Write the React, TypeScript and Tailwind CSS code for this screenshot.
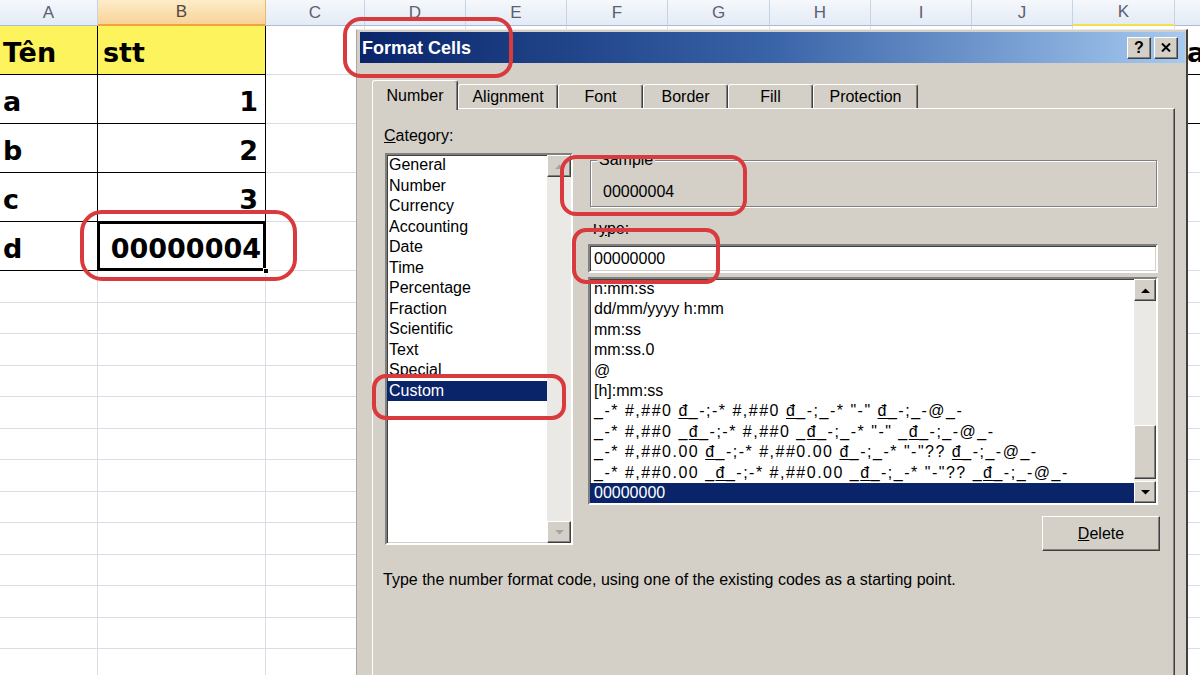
import type { ReactNode } from "react";

// Excel 2007 sheet with the classic "Format Cells" dialog on top, plus red marker boxes.

const COLS = [
  { id: "A", w: "w-[98px]" },
  { id: "B", w: "w-[168px]" },
  { id: "C", w: "w-[99px]" },
  { id: "D", w: "w-[101px]" },
  { id: "E", w: "w-[101px]" },
  { id: "F", w: "w-[101px]" },
  { id: "G", w: "w-[102px]" },
  { id: "H", w: "w-[101px]" },
  { id: "I", w: "w-[101px]" },
  { id: "J", w: "w-[101px]" },
  { id: "K", w: "w-[102px]" },
  { id: "L", w: "w-[101px]" },
];

const TABLE = [
  { a: "Tên", b: "stt", l: "a" },
  { a: "a", b: "1" },
  { a: "b", b: "2" },
  { a: "c", b: "3" },
  { a: "d", b: "00000004" },
];

const EMPTY_ROWS = ["h-[32px]", "h-[31px]", "h-[32px]", "h-[31px]", "h-[32px]", "h-[31px]", "h-[32px]", "h-[31px]", "h-[32px]", "h-[31px]", "h-[32px]", "h-[31px]", "h-[32px]"];

const CATEGORIES = ["General", "Number", "Currency", "Accounting", "Date", "Time", "Percentage", "Fraction", "Scientific", "Text", "Special", "Custom"];

// "₫" is drawn the way Tahoma shows it: an underlined đ
const FORMATS = [
  "h:mm:ss",
  "dd/mm/yyyy h:mm",
  "mm:ss",
  "mm:ss.0",
  "@",
  "[h]:mm:ss",
  '_-* #,##0 ₫_-;-* #,##0 ₫_-;_-* "-" ₫_-;_-@_-',
  '_-* #,##0 _₫_-;-* #,##0 _₫_-;_-* "-" _₫_-;_-@_-',
  '_-* #,##0.00 ₫_-;-* #,##0.00 ₫_-;_-* "-"?? ₫_-;_-@_-',
  '_-* #,##0.00 _₫_-;-* #,##0.00 _₫_-;_-* "-"?? _₫_-;_-@_-',
  "00000000",
];

const TABS = [
  { label: "Number", w: "w-[86px]" },
  { label: "Alignment", w: "w-[100px]" },
  { label: "Font", w: "w-[85px]" },
  { label: "Border", w: "w-[85px]" },
  { label: "Fill", w: "w-[85px]" },
  { label: "Protection", w: "w-[105px]" },
];

const raised = "bg-[#d4d0c8] border border-t-white border-l-white border-r-[#404040] border-b-[#404040] shadow-[inset_-1px_-1px_0_#808080]";
const sunken = "bg-white border-2 border-t-[#808080] border-l-[#808080] border-r-white border-b-white shadow-[inset_1px_1px_0_#404040,inset_-1px_-1px_0_#d4d0c8]";

export default function App() {
  return (
    <div className="relative w-[1200px] h-[675px] overflow-hidden bg-white font-['Liberation_Sans',Arial,sans-serif] text-black">
      <Sheet />
      <FormatCells />

      {/* red marker boxes drawn over the screenshot */}
      <div className="absolute left-[343px] top-[17px] w-[170px] h-[61px] rounded-[18px] border-[4px] border-[#d93a3d]" />
      <div className="absolute left-[80px] top-[210px] w-[217px] h-[71px] rounded-[22px] border-[4px] border-[#d93a3d]" />
      <div className="absolute left-[560px] top-[155px] w-[187px] h-[61px] rounded-[16px] border-[4px] border-[#d93a3d]" />
      <div className="absolute left-[572px] top-[228px] w-[148px] h-[56px] rounded-[14px] border-[4px] border-[#d93a3d]" />
      <div className="absolute left-[372px] top-[374px] w-[194px] h-[46px] rounded-[14px] border-[4px] border-[#d93a3d]" />
    </div>
  );
}

function Sheet() {
  return (
    <div className="flex flex-col">
      <div className="flex h-[26px]">
        {COLS.map((c) => (
          <div
            key={c.id}
            className={`${c.w} shrink-0 flex items-center justify-center border-r text-[17px] ${
              c.id === "B"
                ? "bg-linear-to-b from-[#fdecc9] to-[#f8d398] border-r-[#e6b870] border-b-2 border-b-[#f0a440] text-[#4e4a44]"
                : c.id === "K"
                ? "bg-linear-to-b from-[#f5f8fc] to-[#e4ebf5] border-r-[#c6d3e4] border-b-2 border-b-[#f2e14a] text-[#5b6070]"
                : "bg-linear-to-b from-[#f5f8fc] to-[#e4ebf5] border-r-[#c6d3e4] border-b border-b-[#a7bcd6] text-[#5b6070]"
            }`}
          >
            {c.id}
          </div>
        ))}
      </div>

      {TABLE.map((r, i) => (
        <div key={i} className="flex h-[49px]">
          {COLS.map((c) => (
            <TableCell key={c.id} col={c.id} w={c.w} row={i} a={r.a} b={r.b} l={r.l} />
          ))}
        </div>
      ))}

      {EMPTY_ROWS.map((h, i) => (
        <div key={i} className={`flex ${h}`}>
          {COLS.map((c) => (
            <div key={c.id} className={`${c.w} shrink-0 border-r border-b border-[#dadde6]`} />
          ))}
        </div>
      ))}
    </div>
  );
}

function TableCell({ col, w, row, a, b, l }: { col: string; w: string; row: number; a: string; b: string; l?: string }) {
  const text = "font-['DejaVu_Sans',sans-serif] text-[27px] font-bold leading-none";
  if (col === "A") {
    return (
      <div className={`${w} shrink-0 flex items-end pb-[8px] pl-[3px] border-r border-b border-black ${text} ${row === 0 ? "bg-[#fdf35c]" : ""}`}>
        {a}
      </div>
    );
  }
  if (col === "B") {
    if (row === 4) {
      return (
        <div className={`${w} relative shrink-0 flex items-end justify-end pb-[8px] pr-[4px] border-r border-b border-black shadow-[inset_0_0_0_2px_#000,inset_0_0_0_3px_#fff] ${text}`}>
          {b}
          <span className="absolute right-[-4px] bottom-[-4px] w-[6px] h-[6px] bg-black border border-white" />
        </div>
      );
    }
    return (
      <div className={`${w} shrink-0 flex items-end justify-end pb-[8px] pr-[7px] border-r border-b border-black ${text} ${row === 0 ? "justify-start pl-[5px] bg-[#fdf35c]" : ""}`}>
        {b}
      </div>
    );
  }
  if (col === "L") {
    return (
      <div className={`${w} shrink-0 flex items-end pb-[8px] pl-[12px] border-r border-[#dadde6] ${row < 2 ? "border-b border-b-black" : "border-b"} ${text}`}>
        {l}
      </div>
    );
  }
  return <div className={`${w} shrink-0 border-r border-b border-[#dadde6]`} />;
}

function FormatCode({ code }: { code: string }) {
  const parts = code.split("₫");
  return (
    <>
      {parts.map((p, i) => (
        <span key={i}>
          {p}
          {i < parts.length - 1 && <span className="underline underline-offset-[2px]">đ</span>}
        </span>
      ))}
    </>
  );
}

function FormatCells() {
  return (
    <div className="absolute left-[356px] top-[29px] w-[832px] h-[660px] flex flex-col bg-[#d4d0c8] border-l border-t border-l-[#aaa69e] border-t-[#ecebe7] border-r-2 border-r-[#404040] pt-[2px] pl-[3px] pr-[1px] text-[16px] leading-[20px]">
      {/* title bar */}
      <div className="h-[31px] shrink-0 flex items-center justify-between bg-linear-to-r from-[#0a246a] via-[#3a64a8] to-[#a6caf0] pl-[2px] pr-[7px]">
        <span className="text-[18px] font-bold text-white">Format Cells</span>
        <div className="flex gap-[3px]">
          <div className={`${raised} w-[24px] h-[22px] flex items-center justify-center text-[16px] font-bold leading-none`}>?</div>
          <div className={`${raised} w-[24px] h-[22px] flex items-center justify-center`}>
            <svg width="10" height="9" viewBox="0 0 10 9">
              <path d="M1 0.5 L9 8.5 M9 0.5 L1 8.5" stroke="#000" strokeWidth="2" />
            </svg>
          </div>
        </div>
      </div>

      <div className="flex-1 flex flex-col pl-[12px] pr-[10px] pt-[17px]">
        {/* tabs */}
        <div className="relative z-10 flex items-end h-[30px] -mb-[2px]">
          {TABS.map((t, i) => (
            <div
              key={t.label}
              className={`${t.w} flex items-center justify-center rounded-t-[3px] border-t border-l border-t-white border-l-white border-r border-r-[#404040] shadow-[inset_-1px_0_0_#808080] bg-[#d4d0c8] ${
                i === 0 ? "h-[30px]" : "h-[24px] mb-[2px]"
              }`}
            >
              {t.label}
            </div>
          ))}
        </div>

        {/* tab page */}
        <div className="flex-1 border-t border-l border-t-white border-l-white border-r border-r-[#404040] shadow-[inset_-1px_0_0_#808080] pl-[12px] pt-[17px]">
          <div className="flex">
            <div className="w-[188px] shrink-0 flex flex-col">
              <div className="h-[20px] -ml-[1px]">
                <span className="underline">C</span>ategory:
              </div>
              <div className={`${sunken} mt-[7px] h-[392px] flex`}>
                <div className="flex-1 flex flex-col">
                  {CATEGORIES.map((c) => (
                    <div
                      key={c}
                      className={`h-[20.5px] leading-[20.5px] pl-[2px] ${c === "Custom" ? "bg-[#0a246a] text-white" : ""} ${
                        c === "Special" ? "[clip-path:inset(0_0_4px_0)]" : ""
                      }`}
                    >
                      {c}
                    </div>
                  ))}
                </div>
                <ScrollBar w="w-[24px]" disabled thumb={false} />
              </div>
            </div>

            <div className="w-[570px] shrink-0 ml-[15px] pt-[34px] flex flex-col">
              <div className="relative ml-[2px] mr-[1px] h-[47px] border border-[#808080] shadow-[inset_1px_1px_0_#fff,1px_1px_0_#fff] pl-[12px] pt-[21px]">
                <span className="absolute left-[6px] -top-[11px] px-[2px] bg-[#d4d0c8] [clip-path:inset(6px_0_0_0)]">Sample</span>
                00000004
              </div>
              <div className="mt-[12px] h-[20px] pl-[2px] [clip-path:inset(5px_0_0_0)]">
                T<span className="underline">y</span>pe:
              </div>
              <div className={`${sunken} mt-[5px] h-[29px] pl-[4px] leading-[25px]`}>00000000</div>
              <div className={`${sunken} mt-[4px] h-[228px] flex`}>
                <div className="flex-1 flex flex-col whitespace-nowrap overflow-hidden">
                  {FORMATS.map((f, i) => (
                    <div
                      key={f}
                      className={`h-[20.4px] leading-[20.4px] pl-[4px] ${i === 0 ? "[clip-path:inset(6px_0_0_0)]" : ""} ${
                        i >= 6 && i <= 9 ? "tracking-[1.5px]" : ""
                      } ${i === FORMATS.length - 1 ? "bg-[#0a246a] text-white" : ""}`}
                    >
                      <FormatCode code={f} />
                    </div>
                  ))}
                </div>
                <ScrollBar w="w-[22px]" thumb />
              </div>
              <div className={`${raised} self-end -mr-[2px] mt-[11px] w-[118px] h-[35px] flex items-center justify-center`}>
                <span>
                  <span className="underline">D</span>elete
                </span>
              </div>
            </div>
          </div>

          <p className="mt-[19px] -ml-[2px]">Type the number format code, using one of the existing codes as a starting point.</p>
        </div>
      </div>
    </div>
  );
}

function ScrollBar({ w, disabled, thumb }: { w: string; disabled?: boolean; thumb: boolean }) {
  return (
    <div className={`${w} shrink-0 flex flex-col bg-[#ebe9e5]`}>
      <ArrowBtn up disabled={disabled} />
      <div className="flex-1 flex flex-col">
        {thumb && (
          <>
            <div className="h-[124px]" />
            <div className={`${raised} h-[54px]`} />
          </>
        )}
      </div>
      <ArrowBtn disabled={disabled} />
    </div>
  );
}

function ArrowBtn({ up, disabled }: { up?: boolean; disabled?: boolean }): ReactNode {
  return (
    <div className={`${raised} h-[22px] flex items-center justify-center`}>
      <svg width="9" height="5" viewBox="0 0 9 5">
        <path d={up ? "M0 5 L4.5 0.5 L9 5 Z" : "M0 0 L4.5 4.5 L9 0 Z"} fill={disabled ? "#a7a49d" : "#000"} />
      </svg>
    </div>
  );
}
